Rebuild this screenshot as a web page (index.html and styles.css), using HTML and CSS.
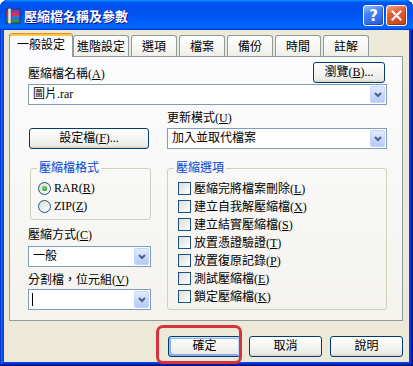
FILE: index.html
```html
<!DOCTYPE html>
<html lang="zh-Hant">
<head>
    <meta charset="UTF-8">
    <meta name="viewport" content="width=device-width, initial-scale=1.0">
    <title>壓縮檔名稱及參數</title>
    <link rel="stylesheet" href="styles.css">
</head>
<body>
    <div class="window">
        <div class="titlebar">
            <svg class="app-icon" width="16" height="16" viewBox="0 0 16 16">
                <rect x="1" y="1" width="14" height="3.5" fill="#7b3db5"/>
                <rect x="1" y="4.5" width="14" height="3.5" fill="#d8345a"/>
                <rect x="1" y="8" width="14" height="3.5" fill="#3a6fd8"/>
                <rect x="1" y="11.5" width="14" height="3.5" fill="#2f9a3c"/>
                <rect x="1" y="1" width="14" height="14" fill="none" stroke="#2a2a40" stroke-width="0.8"/>
                <rect x="3" y="0.5" width="3" height="15" fill="#ececec" stroke="#555" stroke-width="0.6"/>
            </svg>
            <span class="title">壓縮檔名稱及參數</span>
            <div class="caption-buttons">
                <button class="cap-btn help">?</button>
                <button class="cap-btn close">
                    <svg width="11" height="11" viewBox="0 0 11 11">
                        <path d="M1.5 1.5 L9.5 9.5 M9.5 1.5 L1.5 9.5" stroke="#fff" stroke-width="2" stroke-linecap="square"/>
                    </svg>
                </button>
            </div>
        </div>

        <div class="client">
            <div class="tabs">
                <div class="tab active">一般設定</div>
                <div class="tab wide">進階設定</div>
                <div class="tab">選項</div>
                <div class="tab">檔案</div>
                <div class="tab">備份</div>
                <div class="tab">時間</div>
                <div class="tab">註解</div>
            </div>

            <div class="panel">
                <div class="row-top">
                    <span class="lbl">壓縮檔名稱(<u>A</u>)</span>
                    <button class="btn browse">瀏覽(<u>B</u>)...</button>
                </div>
                <div class="combo name-combo">
                    <span class="combo-text">圖片.rar</span>
                    <span class="drop"><svg width="8" height="6" viewBox="0 0 8 6"><path d="M1 1 L4 4 L7 1" fill="none" stroke="#4d6185" stroke-width="2"/></svg></span>
                </div>

                <div class="columns">
                    <div></div>
                    <span class="lbl mode-lbl">更新模式(<u>U</u>)</span>
                    <button class="btn profile">設定檔(<u>F</u>)...</button>
                    <div class="combo">
                        <span class="combo-text">加入並取代檔案</span>
                        <span class="drop"><svg width="8" height="6" viewBox="0 0 8 6"><path d="M1 1 L4 4 L7 1" fill="none" stroke="#4d6185" stroke-width="2"/></svg></span>
                    </div>

                    <div class="left-stack">
                        <fieldset class="group">
                            <legend>壓縮檔格式</legend>
                            <div class="opt radio-opt"><span class="radio checked"></span><span>RAR(<u>R</u>)</span></div>
                            <div class="opt radio-opt"><span class="radio"></span><span>ZIP(<u>Z</u>)</span></div>
                        </fieldset>
                        <span class="lbl method-lbl">壓縮方式(<u>C</u>)</span>
                        <div class="combo small-combo">
                            <span class="combo-text">一般</span>
                            <span class="drop"><svg width="8" height="6" viewBox="0 0 8 6"><path d="M1 1 L4 4 L7 1" fill="none" stroke="#4d6185" stroke-width="2"/></svg></span>
                        </div>
                        <span class="lbl split-lbl">分割檔，位元組(<u>V</u>)</span>
                        <div class="combo split-combo">
                            <span class="caret"></span>
                            <span class="drop"><svg width="8" height="6" viewBox="0 0 8 6"><path d="M1 1 L4 4 L7 1" fill="none" stroke="#4d6185" stroke-width="2"/></svg></span>
                        </div>
                    </div>

                    <fieldset class="group options">
                        <legend>壓縮選項</legend>
                        <div class="opt check-opt"><span class="check"></span><span>壓縮完將檔案刪除(<u>L</u>)</span></div>
                        <div class="opt check-opt"><span class="check"></span><span>建立自我解壓縮檔(<u>X</u>)</span></div>
                        <div class="opt check-opt"><span class="check"></span><span>建立結實壓縮檔(<u>S</u>)</span></div>
                        <div class="opt check-opt"><span class="check"></span><span>放置憑證驗證(<u>T</u>)</span></div>
                        <div class="opt check-opt"><span class="check"></span><span>放置復原記錄(<u>P</u>)</span></div>
                        <div class="opt check-opt"><span class="check"></span><span>測試壓縮檔(<u>E</u>)</span></div>
                        <div class="opt check-opt"><span class="check"></span><span>鎖定壓縮檔(<u>K</u>)</span></div>
                    </fieldset>
                </div>
            </div>

            <div class="actions">
                <button class="btn action default">確定</button>
                <button class="btn action">取消</button>
                <button class="btn action">說明</button>
            </div>
        </div>

        <div class="mark"></div>
    </div>
</body>
</html>
```

FILE: styles.css
```css
body {
    margin: 0;
    padding: 0;
    font-family: "Liberation Serif", "Noto Sans CJK TC", serif;
    font-size: 12px;
    color: #000;
}
.window {
    position: relative;
    width: 413px;
    height: 366px;
    box-sizing: border-box;
    display: flex;
    flex-direction: column;
    background: #0842dd;
    border-radius: 8px 8px 0 0;
    box-shadow: inset -1px -1px #00138c, inset 1px 1px #0831d9,
        inset -2px -2px #001ea0, inset 2px 2px #166aee,
        inset -3px -3px #003bda, inset 3px 3px #0855dd;
}
.titlebar {
    height: 30px;
    box-sizing: border-box;
    display: flex;
    align-items: center;
    padding: 5px 6px 4px 5px;
    border-radius: 8px 8px 0 0;
    background: linear-gradient(180deg, #0997ff, #0053ee 8%, #0050ee 40%, #06f 88%, #06f 93%, #005bff 95%, #003dd7 96%, #003dd7);
}
.app-icon {
    flex: none;
    margin-top: 1px;
}
.title {
    margin-left: 3px;
    font-family: "Noto Sans CJK TC", sans-serif;
    font-weight: bold;
    font-size: 13px;
    line-height: 16px;
    color: #fff;
    text-shadow: 1px 1px #0f1089;
}
.caption-buttons {
    margin-left: auto;
    display: flex;
    gap: 2px;
}
.cap-btn {
    width: 21px;
    height: 21px;
    padding: 0;
    box-sizing: border-box;
    border: 1px solid #fff;
    border-radius: 3px;
    display: flex;
    align-items: center;
    justify-content: center;
    color: #fff;
    box-shadow: inset -1px -1px rgba(0, 0, 40, 0.25);
}
.help {
    font-family: "DejaVu Sans", sans-serif;
    font-weight: bold;
    font-size: 15px;
    background: linear-gradient(160deg, #9cbcfc 0%, #4a82f6 35%, #2058e2 100%);
}
.close {
    background: linear-gradient(160deg, #f3a58a 0%, #e4603a 35%, #c63e18 100%);
}
.client {
    flex: 1;
    margin: 0 4px 4px;
    padding: 3px 6px 0 5px;
    background: #ece9d8;
}
.tabs {
    position: relative;
    z-index: 1;
    display: flex;
    align-items: flex-end;
    height: 23px;
}
.tab {
    width: 46px;
    height: 21px;
    box-sizing: border-box;
    margin-right: 2px;
    padding-top: 3px;
    border: 1px solid #919b9c;
    border-bottom: none;
    border-radius: 3px 3px 0 0;
    background: linear-gradient(180deg, #fff, #fafaf9 26%, #f0f0ea 95%, #ecebe5);
    text-align: center;
    line-height: 17px;
    white-space: nowrap;
}
.tab.wide {
    width: 56px;
}
.tab.active {
    width: 64px;
    height: 24px;
    margin-right: 0;
    margin-bottom: -1px;
    border-top: 1px solid #e68b2c;
    background: #fcfcfe;
    box-shadow: inset 0 2px #ffc83c;
}
.panel {
    height: 265px;
    box-sizing: border-box;
    border: 1px solid #919b9c;
    padding: 5px 15px 0 18px;
    background: linear-gradient(180deg, #fcfcfe, #f4f3ee);
}
.lbl {
    display: block;
    line-height: 15px;
    white-space: nowrap;
}
.row-top {
    display: flex;
    justify-content: space-between;
    align-items: flex-end;
    height: 21px;
}
.row-top .lbl {
    margin-bottom: 1px;
}
.btn {
    height: 21px;
    box-sizing: border-box;
    padding: 0;
    border: 1px solid #003c74;
    border-radius: 3px;
    background: linear-gradient(180deg, #fff, #ecebe6 86%, #d6d0c5);
    font: inherit;
    line-height: 19px;
    color: #000;
    text-align: center;
}
.browse {
    width: 72px;
    margin-right: 2px;
}
.combo {
    height: 21px;
    box-sizing: border-box;
    display: flex;
    align-items: center;
    padding-left: 4px;
    border: 1px solid #7f9db9;
    background: #fff;
}
.name-combo {
    margin-top: 1px;
}
.combo-text {
    line-height: 15px;
    white-space: nowrap;
}
.drop {
    margin-left: auto;
    margin-right: 1px;
    width: 15px;
    height: 17px;
    box-sizing: border-box;
    display: flex;
    align-items: center;
    justify-content: center;
    border: 1px solid #c3d3fd;
    border-radius: 2px;
    background: linear-gradient(180deg, #e3ebfd, #c8d7fc 55%, #b6caf6);
}
.columns {
    display: grid;
    grid-template-columns: 123px 220px;
    column-gap: 16px;
    margin-top: 6px;
}
.mode-lbl {
    margin-bottom: 2px;
}
.profile {
    width: 120px;
    margin-left: 1px;
}
.left-stack,
.options {
    margin-top: 12px;
}
.group {
    margin-left: 0;
    margin-right: 0;
    min-width: 0;
    padding: 4px 0 4px;
    border: 1px solid #d0d0bf;
    border-radius: 3px;
}
.left-stack .group {
    margin: 0 0 0 2px;
}
.options {
    margin-left: 0;
    padding-bottom: 3px;
}
.group legend {
    margin-left: 6px;
    padding: 0 2px;
    line-height: 14px;
    color: #0046d5;
}
.opt {
    height: 18px;
    display: flex;
    align-items: center;
    gap: 3px;
    white-space: nowrap;
}
.radio-opt {
    padding-left: 7px;
}
.check-opt {
    padding-left: 10px;
}
.radio {
    width: 13px;
    height: 13px;
    box-sizing: border-box;
    border: 1px solid #1c5180;
    border-radius: 50%;
    background: linear-gradient(135deg, #dcdcd7, #fff);
    display: flex;
    align-items: center;
    justify-content: center;
}
.radio.checked::after {
    content: "";
    width: 5px;
    height: 5px;
    border-radius: 50%;
    background: radial-gradient(circle at 40% 35%, #7de07d, #21a121 70%);
}
.check {
    width: 13px;
    height: 13px;
    box-sizing: border-box;
    border: 1px solid #1c5180;
    background: linear-gradient(135deg, #dcdcd7, #fff);
}
.method-lbl {
    margin-top: 8px;
}
.small-combo {
    margin-top: 3px;
}
.split-lbl {
    margin-top: 6px;
}
.split-combo {
    margin-top: 1px;
    padding-left: 3px;
}
.caret {
    width: 1px;
    height: 13px;
    background: #000;
}
.actions {
    display: flex;
    justify-content: flex-end;
    gap: 8px;
    margin-top: 15px;
}
.action {
    width: 73px;
}
.default {
    box-shadow: inset -1px 1px #cee7ff, inset 1px 2px #98b8ea,
        inset -2px 2px #bcd4f6, inset 1px -1px #89ade4, inset 2px -2px #89ade4;
}
.mark {
    position: absolute;
    left: 156px;
    top: 325px;
    width: 86px;
    height: 39px;
    box-sizing: border-box;
    border: 3px solid #d6333a;
    border-radius: 7px;
    pointer-events: none;
}
```
